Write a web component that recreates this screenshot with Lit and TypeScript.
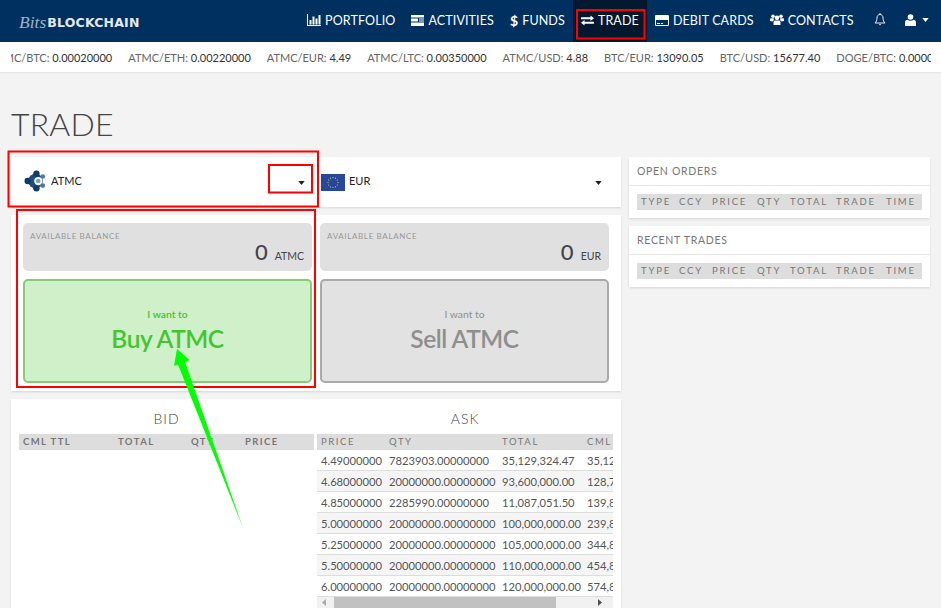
import { LitElement, html, css, svg } from "lit";
import { customElement } from "lit/decorators.js";

const caret = html`<svg class="caret" viewBox="0 0 8 5" width="7" height="4"><path d="M0 0h8L4 5z" fill="currentColor"/></svg>`;

const icons: Record<string, unknown> = {
  chart: html`<svg class="ic" width="14" height="12" viewBox="0 0 14 12"><path fill="#fff" d="M0 0h1v11h13v1H0z"/><path fill="#fff" d="M2.500 6h2v4.500h-2zM5.500 2.500h2v8h-2zM8.500 4.500h2v6h-2zM11.500 1h2v9.500h-2z"/></svg>`,
  list: html`<svg class="ic" width="13" height="11" viewBox="0 0 13 11"><path fill="#fff" d="M0 0h13v2.500H0zM0 3.500h7v3H0zM8 3.500h5v1H8zM8 5.500h5v1H8zM0 7.500h13v3.500H0z"/></svg>`,
  dollar: html`<span class="ic glyph">$</span>`,
  exchange: html`<svg class="ic" width="13" height="11" viewBox="0 0 13 11"><path fill="#fff" d="M0 2.200h9.500V.5L13 3.200 9.500 5.900V4.200H0zM13 6.800H3.500V5.100L0 7.800l3.500 2.700V8.800H13z"/></svg>`,
  card: html`<svg class="ic" width="14" height="11" viewBox="0 0 14 11"><path fill="#fff" fill-rule="evenodd" d="M1.200 0h11.600A1.200 1.200 0 0 1 14 1.200v8.600A1.200 1.200 0 0 1 12.800 11H1.200A1.200 1.200 0 0 1 0 9.800V1.200A1.200 1.200 0 0 1 1.200 0zM1 5v5h12V5zM2 8h3v1H2zM6 8h2v1H6z"/></svg>`,
  users: html`<svg class="ic" width="14" height="12" viewBox="0 0 14 12"><g fill="#fff"><circle cx="7" cy="3.800" r="2.300"/><circle cx="3" cy="2.200" r="1.800"/><circle cx="11" cy="2.200" r="1.800"/><path d="M3.500 11V8.500C3.500 7 4.500 6.500 5.300 6.500h3.400c.8 0 1.800.5 1.800 2V11z"/><path d="M0 7V5.400C0 4.800.5 4.300 1.200 4.300h2.600c-.2 1-.2 1.400.4 2C3.200 6.500 2.800 7 2.600 7.600zM14 7V5.400c0-.6-.5-1.100-1.200-1.100h-2.600c.2 1 .2 1.400-.4 2 1 .2 1.400.7 1.600 1.300z"/></g></svg>`,
  bell: html`<svg width="12" height="13" viewBox="0 0 12 13"><path fill="none" stroke="#fff" stroke-width=".9" d="M6 1.500C3.800 1.500 3 3.200 3 5c0 2.500-1 4-2 5h10c-1-1-2-2.500-2-5 0-1.800-.8-3.500-3-3.500z"/><path fill="#fff" d="M5 11h2l-1 1.500zM5.500 0h1v1.500h-1z"/></svg>`,
  user: html`<svg width="11" height="12" viewBox="0 0 11 12"><g fill="#fff"><circle cx="5.500" cy="3" r="2.800"/><path d="M0 12V9c0-2 1.200-3.200 2.500-3.200.8.700 1.800 1 3 1s2.200-.3 3-1C9.800 5.800 11 7 11 9v3z"/></g></svg>`,
};

const nav = [
  ["chart", "PORTFOLIO"],
  ["list", "ACTIVITIES"],
  ["dollar", "FUNDS"],
  ["exchange", "TRADE"],
  ["card", "DEBIT CARDS"],
  ["users", "CONTACTS"],
];

const ticker = [
  ["ATMC/BTC", "0.00020000"],
  ["ATMC/ETH", "0.00220000"],
  ["ATMC/EUR", "4.49"],
  ["ATMC/LTC", "0.00350000"],
  ["ATMC/USD", "4.88"],
  ["BTC/EUR", "13090.05"],
  ["BTC/USD", "15677.40"],
  ["DOGE/BTC", "0.00000100"],
];

const asks = [
  ["4.49000000", "7823903.00000000", "35,129,324.47", "35,129,324.47"],
  ["4.68000000", "20000000.00000000", "93,600,000.00", "128,729,324.47"],
  ["4.85000000", "2285990.00000000", "11,087,051.50", "139,816,375.97"],
  ["5.00000000", "20000000.00000000", "100,000,000.00", "239,816,375.97"],
  ["5.25000000", "20000000.00000000", "105,000,000.00", "344,816,375.97"],
  ["5.50000000", "20000000.00000000", "110,000,000.00", "454,816,375.97"],
  ["6.00000000", "20000000.00000000", "120,000,000.00", "574,816,375.97"],
];

const miniCols = [
  ["TYPE", 38],
  ["CCY", 33],
  ["PRICE", 45],
  ["QTY", 33],
  ["TOTAL", 46],
  ["TRADE", 50],
  ["TIME", 40],
] as const;

@customElement("app-root")
export class AppRoot extends LitElement {
  static styles = css`
    :host {
      display: block;
      position: relative;
      width: 941px;
      height: 608px;
      overflow: hidden;
      background: #f3f3f3;
      font-family: Lato, "Open Sans", sans-serif;
      color: #333;
    }
    .nav {
      height: 42px;
      background: #00305f;
      display: flex;
      align-items: stretch;
      color: #fff;
    }
    .logo {
      display: flex;
      align-items: center;
      gap: 1px;
      padding: 2px 0 0 19px;
      width: 299px;
      box-sizing: border-box;
      color: #e4e9ef;
    }
    .logo .bits {
      font: italic 17.500px "Liberation Serif", serif;
      color: #9fb0c4;
    }
    .logo .bc {
      font: 700 12.500px "DejaVu Sans", sans-serif;
      letter-spacing: 0.2px;
    }
    .links {
      display: flex;
      align-items: stretch;
    }
    .link {
      display: flex;
      align-items: center;
      gap: 4px;
      padding: 0 8px 2px;
      font-size: 12.500px;
      white-space: nowrap;
      letter-spacing: 0.12px;
    }
    .link.active {
      background: #02182f;
    }
    .glyph {
      font-weight: 700;
      font-size: 14px;
    }
    .ic {
      display: block;
    }
    .tools {
      display: flex;
      align-items: center;
      gap: 19px;
      padding: 0 0 3px 12px;
    }
    .me {
      display: flex;
      align-items: center;
      gap: 6px;
    }
    .caret {
      display: block;
    }
    .ticker {
      height: 31px;
      background: #fff;
      border-bottom: 1px solid #e6e6e6;
      box-sizing: border-box;
      padding: 0 10px 0 11px;
    }
    .tick-clip {
      overflow: hidden;
      height: 100%;
    }
    .tick-row {
      display: flex;
      align-items: center;
      gap: 16px;
      height: 100%;
      margin-left: -20.500px;
      white-space: nowrap;
      font-size: 11px;
      color: #666;
    }
    .tick-row b {
      font-weight: 400;
      color: #333;
    }
    h1 {
      margin: 0;
      padding: 30px 0 0 11px;
      height: 84px;
      box-sizing: border-box;
      font-size: 32px;
      line-height: 42px;
      font-weight: 300;
      letter-spacing: 0.2px;
      color: #444;
    }
    .grid {
      display: grid;
      grid-template-columns: 610px 301px;
      gap: 8px;
      padding: 0 11px;
      align-items: start;
    }
    .col {
      display: flex;
      flex-direction: column;
      gap: 8px;
    }
    .box {
      background: #fff;
      box-shadow: 0 1px 2px rgba(0, 0, 0, 0.12);
    }
    .pick {
      height: 50px;
      display: grid;
      grid-template-columns: 289px 289px;
      gap: 8px;
      padding: 0 12px;
    }
    .pick > div {
      display: flex;
      align-items: center;
      font-size: 11px;
      color: #222;
      padding-right: 7px;
      padding-bottom: 4px;
    }
    .pick .name {
      margin-left: 4px;
      flex: 1;
    }
    .pick .caret {
      margin-top: 5px;
    }
    .pick .eu {
      margin-left: 1px;
      margin-top: 5px;
    }
    .pick .atmc {
      margin-left: 1px;
      margin-top: 2px;
    }
    .trade {
      height: 176px;
      box-sizing: border-box;
      padding: 8px 12px;
      display: grid;
      grid-template-columns: 289px 289px;
      grid-template-rows: 48px 104px;
      gap: 8px;
    }
    .bal {
      background: #e0e0e0;
      border-radius: 5px;
      padding: 8px 8px 0 7px;
      box-sizing: border-box;
    }
    .bal .lab {
      font-size: 8px;
      line-height: 11px;
      letter-spacing: 0.65px;
      color: #999;
    }
    .bal .val {
      display: flex;
      justify-content: flex-end;
      align-items: baseline;
      gap: 7px;
      color: #444;
      font-size: 10.500px;
      line-height: 22px;
      margin-top: -1px;
    }
    .bal .val span {
      font-size: 22px;
      font-weight: 500;
    }
    .btn {
      border-radius: 5px;
      border: 2px solid;
      box-sizing: border-box;
      display: flex;
      flex-direction: column;
      align-items: center;
      padding-top: 26px;
    }
    .btn small {
      font-size: 10.300px;
      line-height: 14px;
    }
    .btn strong {
      font-size: 24.500px;
      line-height: 36px;
      font-weight: 600;
      letter-spacing: -0.45px;
    }
    .buy {
      background: #cff0c8;
      border-color: #87cb79;
      color: #42c52f;
    }
    .buy small {
      font-weight: 600;
    }
    .sell {
      background: #e2e2e2;
      border-color: #aaa;
      color: #8e8e8e;
    }
    .book {
      height: 220px;
      padding: 0 8px 0 8px;
      display: grid;
      grid-template-columns: 295px 296px;
      gap: 3px;
    }
    .book h2 {
      margin: 0;
      height: 35px;
      padding-top: 10px;
      box-sizing: border-box;
      text-align: center;
      font-size: 14px;
      line-height: 20px;
      font-weight: 300;
      letter-spacing: 1px;
      color: #444;
    }
    .clip {
      overflow: hidden;
      width: 296px;
    }
    table {
      border-collapse: collapse;
      table-layout: fixed;
    }
    th {
      background: #ddd;
      height: 16px;
      padding: 0 0 1px 4px;
      box-sizing: border-box;
      text-align: left;
      font-size: 9.500px;
      font-weight: 700;
      letter-spacing: 1.4px;
      color: #777;
      white-space: nowrap;
      overflow: hidden;
    }
    .ask th {
      font-weight: 400;
      letter-spacing: 1.6px;
    }
    td {
      height: 20px;
      padding: 0 0 0 4px;
      border-bottom: 1px solid #ddd;
      font-size: 11.200px;
      color: #555;
      white-space: nowrap;
      overflow: hidden;
    }
    .ask tr:nth-child(even) td {
      background: #f5f5f5;
    }
    .bar {
      height: 11px;
      background: #f1f1f1;
      display: flex;
      align-items: center;
      width: 296px;
    }
    .bar i {
      display: block;
      width: 222px;
      height: 100%;
      margin-left: 8px;
      background: #c1c1c1;
    }
    .bar svg {
      display: block;
      margin-left: 5px;
    }
    .bar svg:last-child {
      margin-left: 42px;
    }
    .side-head {
      height: 29px;
      box-sizing: border-box;
      border-bottom: 1px solid #e8e8e8;
      padding-left: 8px;
      font-size: 10.500px;
      line-height: 28px;
      letter-spacing: 0.7px;
      color: #777;
    }
    .side-body {
      padding: 8px;
      height: 32px;
      box-sizing: border-box;
    }
    .side-body th {
      font-weight: 400;
      font-size: 9.500px;
      letter-spacing: 1.8px;
    }
    .marks {
      position: absolute;
      inset: 0;
      pointer-events: none;
    }
  `;

  private side(title: string) {
    return html`<div class="box">
      <div class="side-head">${title}</div>
      <div class="side-body">
        <table>
          <colgroup>${miniCols.map(([, w]) => html`<col style="width:${w}px" />`)}</colgroup>
          <thead><tr>${miniCols.map(([n]) => html`<th>${n}</th>`)}</tr></thead>
        </table>
      </div>
    </div>`;
  }

  render() {
    return html`
      <div class="nav">
        <div class="logo"><span class="bits">Bits</span><span class="bc">BLOCKCHAIN</span></div>
        <div class="links">
          ${nav.map(
            ([i, t]) => html`<div class="link ${t === "TRADE" ? "active" : ""}">${icons[i]}${t}</div>`
          )}
        </div>
        <div class="tools">${icons.bell}<div class="me">${icons.user}${caret}</div></div>
      </div>
      <div class="ticker">
        <div class="tick-clip">
          <div class="tick-row">${ticker.map(([k, v]) => html`<span>${k}: <b>${v}</b></span>`)}</div>
        </div>
      </div>
      <h1>TRADE</h1>
      <div class="grid">
        <div class="col">
          <div class="box pick">
            <div>
              <svg class="atmc" width="23" height="22" viewBox="0 0 24 24">
                <circle cx="12" cy="12" r="8" fill="#1f4f80" />
                <circle cx="13" cy="4" r="3.500" fill="#103a68" />
                <circle cx="13" cy="20" r="3.500" fill="#103a68" />
                <circle cx="3.500" cy="12" r="3.500" fill="#103a68" />
                <circle cx="20" cy="7" r="2.500" fill="#4d7ba6" />
                <circle cx="20" cy="17" r="2.500" fill="#4d7ba6" />
                <circle cx="15" cy="12" r="4.500" fill="#fff" />
                <circle cx="15" cy="12" r="2.500" fill="#7ea0c0" />
              </svg>
              <span class="name">ATMC</span>${caret}
            </div>
            <div>
              <svg class="eu" width="24" height="17" viewBox="0 0 24 17">
                <rect width="24" height="17" fill="#27479b" />
                ${[0, 1, 2, 3, 4, 5, 6, 7, 8, 9, 10, 11].map((n) => {
                  const a = (n * Math.PI) / 6;
                  return svg`<circle cx="${12 + 5 * Math.cos(a)}" cy="${8.5 + 5 * Math.sin(a)}" r=".6" fill="#d8cf63" />`;
                })}
              </svg>
              <span class="name">EUR</span>${caret}
            </div>
          </div>
          <div class="box trade">
            <div class="bal">
              <div class="lab">AVAILABLE BALANCE</div>
              <div class="val"><span>0</span>ATMC</div>
            </div>
            <div class="bal">
              <div class="lab">AVAILABLE BALANCE</div>
              <div class="val"><span>0</span>EUR</div>
            </div>
            <div class="btn buy"><small>I want to</small><strong>Buy ATMC</strong></div>
            <div class="btn sell"><small>I want to</small><strong>Sell ATMC</strong></div>
          </div>
          <div class="box book">
            <div>
              <h2>BID</h2>
              <table>
                <colgroup>
                  <col style="width:95px" /><col style="width:73px" /><col style="width:54px" /><col style="width:73px" />
                </colgroup>
                <thead><tr><th>CML TTL</th><th>TOTAL</th><th>QTY</th><th>PRICE</th></tr></thead>
              </table>
            </div>
            <div class="ask">
              <h2>ASK</h2>
              <div class="clip">
                <table style="width:340px">
                  <colgroup>
                    <col style="width:68px" /><col style="width:113px" /><col style="width:85px" /><col style="width:74px" />
                  </colgroup>
                  <thead><tr><th>PRICE</th><th>QTY</th><th>TOTAL</th><th>CML TTL</th></tr></thead>
                  <tbody>${asks.map((r) => html`<tr>${r.map((c) => html`<td>${c}</td>`)}</tr>`)}</tbody>
                </table>
              </div>
              <div class="bar">
                <svg width="4" height="7" viewBox="0 0 4 7"><path d="M4 0v7L0 3.500z" fill="#aaa" /></svg>
                <i></i>
                <svg width="4" height="7" viewBox="0 0 4 7"><path d="M0 0v7l4-3.500z" fill="#505050" /></svg>
              </div>
            </div>
          </div>
        </div>
        <div class="col">${this.side("OPEN ORDERS")}${this.side("RECENT TRADES")}</div>
      </div>
      <svg class="marks" width="941" height="608" viewBox="0 0 941 608">
        <g fill="none" stroke="#f00" stroke-width="2">
          <rect x="577" y="10" width="67.500" height="28.500" />
          <rect x="8.500" y="151.500" width="309.500" height="55" />
          <rect x="269" y="165" width="43" height="27.500" />
          <rect x="17" y="210" width="298" height="177" />
        </g>
        <polygon points="177,349 189.500,360 185,362 243,528 178,364.500 174,366" fill="#00ff00" />
      </svg>
    `;
  }
}
